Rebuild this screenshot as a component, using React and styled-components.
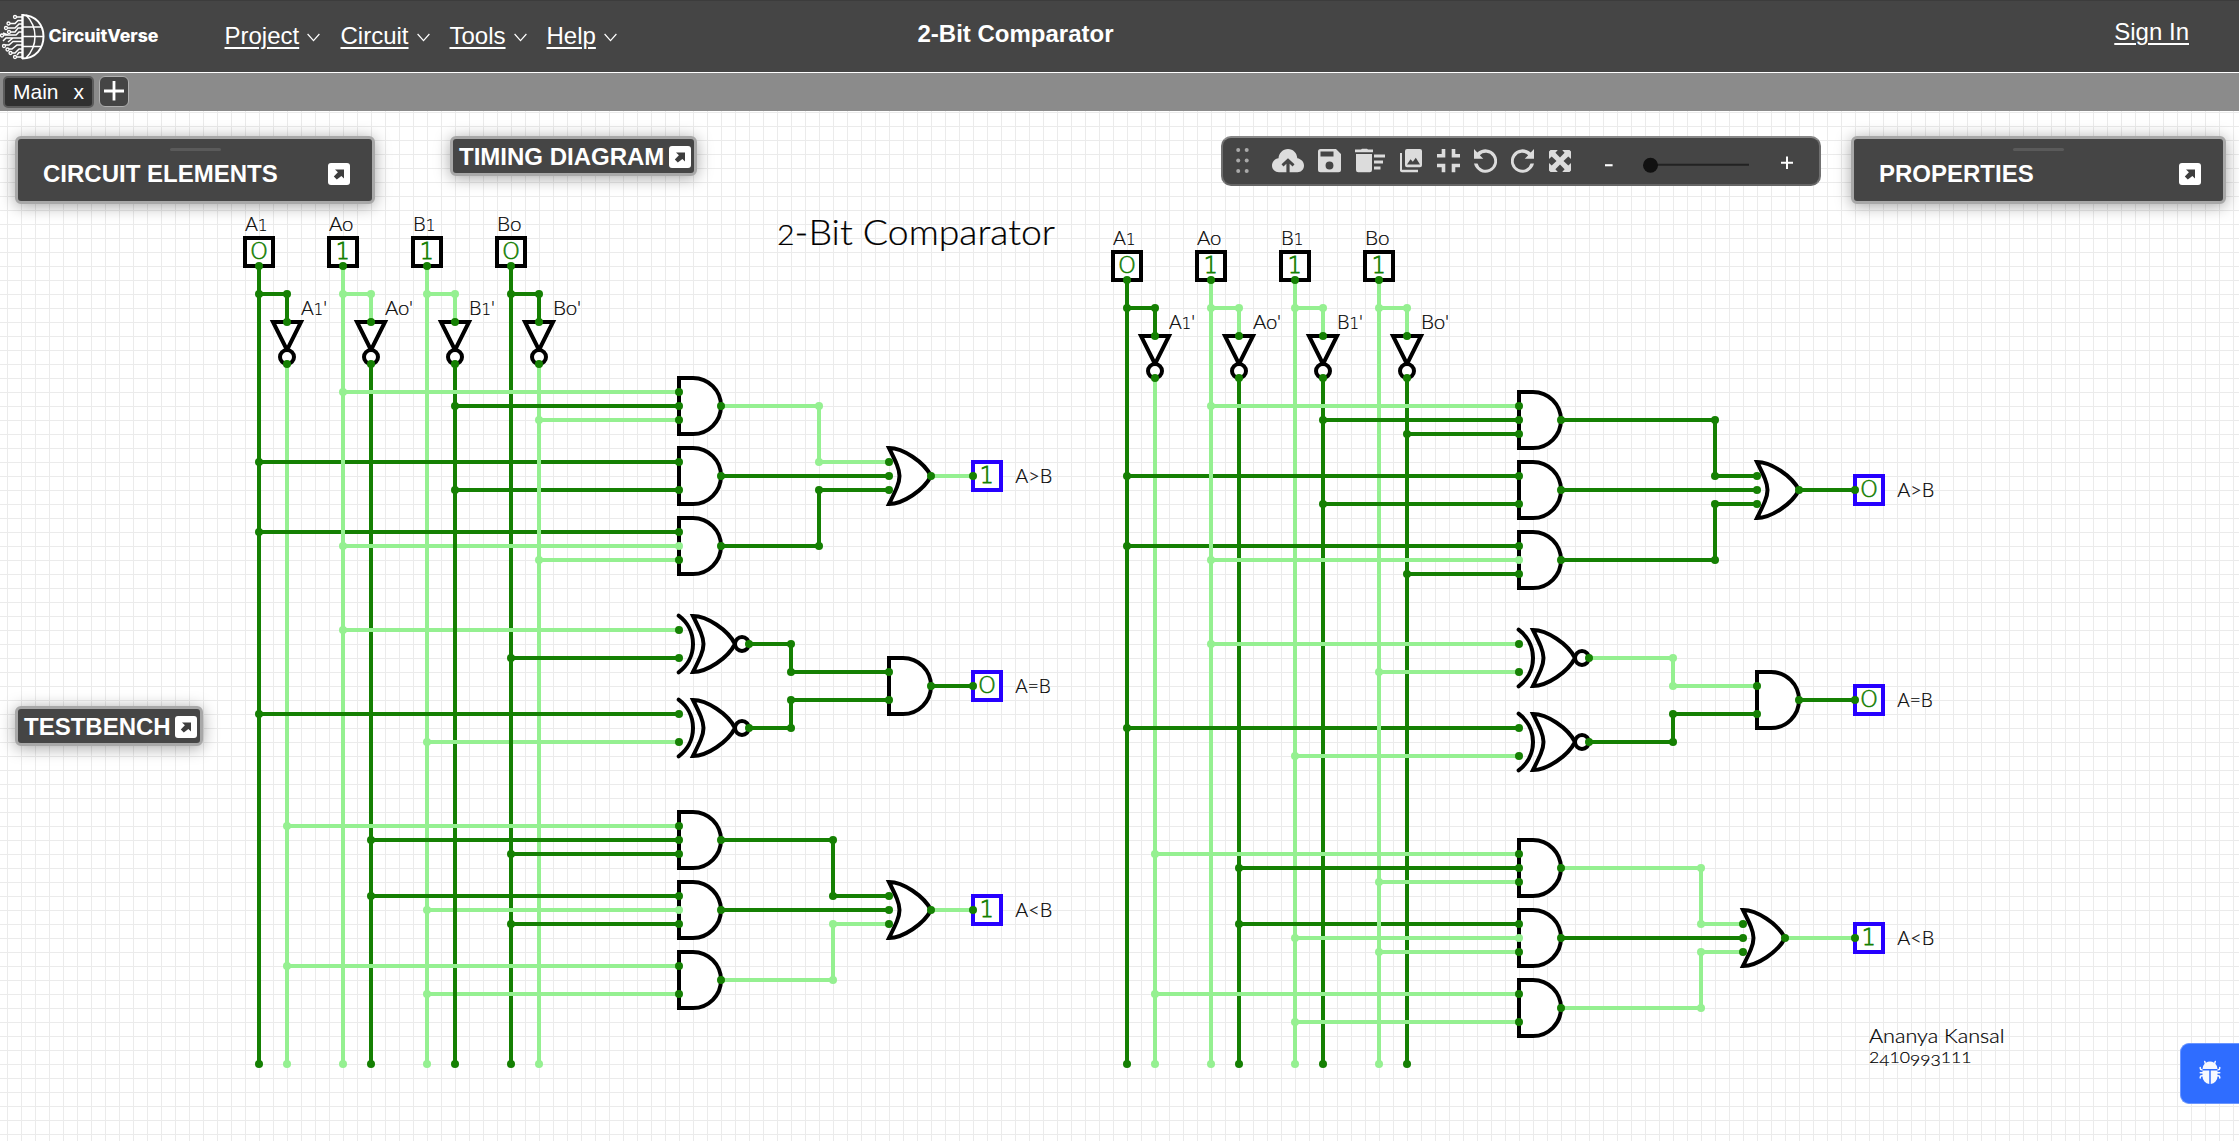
import React from "react";
import styled, { createGlobalStyle } from "styled-components";
import { BsBugFill } from "react-icons/bs";

const DARK = "#158003";
const LIGHT = "#95f091";
const SANS = '"Liberation Sans", Arial, sans-serif';

const GlobalStyle = createGlobalStyle`
  body { margin: 0; background: #fff; overflow: hidden; }
  * { box-sizing: border-box; }
`;

const Page = styled.div`
  display: flex;
  flex-direction: column;
  width: 2239px;
  height: 1141px;
  overflow: hidden;
  font-family: ${SANS};
  color: #fff;
`;

const Header = styled.header`
  display: flex;
  align-items: flex-start;
  flex: none;
  height: 73px;
  padding-right: 50px;
  background: #454545;
  border-top: 1px solid #3c3c3c;
  border-bottom: 1px solid #fff;
  font-size: 24px;
  line-height: 28px;
`;

const Brand = styled.a`
  display: flex;
  width: 224.5px;
  height: 71px;
  padding-top: 12px;
`;

const Menu = styled.nav`
  display: flex;
  width: 693px;
  padding-top: 21px;
`;

const MenuItem = styled.div`
  display: flex;
  align-items: center;
  width: ${(p) => p.$w}px;
`;

const MenuLink = styled.a`
  text-decoration: underline;
  text-decoration-thickness: 2px;
  text-underline-offset: 3px;
  margin-right: 8px;
`;

const ProjectName = styled.div`
  flex: 1;
  padding-top: 19px;
  font-weight: 700;
`;

const SignIn = styled(MenuLink)`
  margin: 17px 0 0;
`;

const TabBar = styled.div`
  display: flex;
  flex: none;
  gap: 5px;
  height: 38px;
  padding: 3px;
  background: #8b8b8b;
`;

const Tab = styled.div`
  display: flex;
  justify-content: space-between;
  width: 91px;
  height: 32px;
  padding: 1px 8px 0;
  border: 2px solid #5c5c5c;
  border-radius: 5px;
  background: #303030;
  font-size: 21px;
  line-height: 26px;
`;

const AddTab = styled.button`
  display: flex;
  align-items: center;
  justify-content: center;
  width: 30px;
  height: 31px;
  padding: 0 0 2px;
  border: 1.5px solid #b0b0b0;
  border-radius: 6px;
  background: #454545;
`;

const Workspace = styled.main`
  position: relative;
  flex: 1;
  overflow: hidden;
  background: #fff;
`;

const Board = styled.svg`
  display: block;
  width: 2239px;
  height: 1030px;
`;

const Wire = styled.path`
  fill: none;
  stroke: ${(p) => (p.$on ? LIGHT : DARK)};
  stroke-width: 4;
`;

const Dot = styled.circle`
  fill: ${(p) => (p.$on ? LIGHT : DARK)};
`;

const Shape = styled.path`
  fill: ${(p) => (p.$open ? "none" : "#fff")};
  stroke: #000;
  stroke-width: 4;
`;

const PinBox = styled.rect`
  fill: #fff;
  stroke: ${(p) => (p.$out ? "#2600ff" : "#000")};
  stroke-width: 4;
`;

const PinValue = styled.text`
  font-family: ${(p) => (p.$round ? "Lato" : '"DejaVu Sans"')}, sans-serif;
  font-size: ${(p) => (p.$round ? 23.5 : 23)}px;
  font-weight: ${(p) => (p.$round ? 300 : 200)};
  fill: ${DARK};
  stroke: ${DARK};
  stroke-width: ${(p) => (p.$round ? 0.3 : 0.8)}px;
`;

const Caption = styled.text`
  font-family: Lato, sans-serif;
  font-weight: 300;
  font-size: ${(p) => p.$size || 19.6}px;
  fill: #000;
  stroke: #000;
  stroke-width: 0.2px;
`;

const SmallDigit = styled.tspan`
  font-size: ${(p) => p.$size || 15}px;
  font-family: ${(p) => (p.$serif ? '"DejaVu Sans"' : "Lato")}, sans-serif;
  font-weight: ${(p) => (p.$serif ? 200 : 300)};
`;

const Panel = styled.section`
  position: absolute;
  left: ${(p) => p.$x}px;
  top: ${(p) => p.$y}px;
  width: ${(p) => p.$w}px;
  height: ${(p) => (p.$compact ? 40 : 68)}px;
  border: 3px solid #a8a8a8;
  border-radius: 6px;
  background: #454545;
  box-shadow: 0 2px 16px rgba(0, 0, 0, 0.36);
  font-size: 24px;
  font-weight: 700;
  line-height: 28px;
`;

const PanelRow = styled.div`
  display: flex;
  align-items: center;
  justify-content: space-between;
  padding: ${(p) => (p.$compact ? "3px 3px 0 6px" : "9px 22px 0 25px")};
`;

const PanelTitle = styled.span`
  padding-top: ${(p) => (p.$compact ? 1 : 0)}px;
`;

const Grip = styled.div`
  width: 51px;
  height: 3px;
  margin: 9px auto 0;
  border-radius: 2px;
  background: #5a5a5a;
`;

const ToolBar = styled.div`
  position: absolute;
  left: 1221px;
  top: 25px;
  display: flex;
  align-items: flex-start;
  width: 600px;
  height: 50px;
  padding: 10px 26px 0 13px;
  border: 2px solid #707070;
  border-top-color: #888;
  border-bottom-color: #666;
  border-radius: 10px;
  background: #454545;
`;

const ToolIcon = styled.svg`
  flex: none;
  width: ${(p) => p.$w}px;
  height: 25px;
  margin-right: ${(p) => p.$gap}px;
  fill: #dcdcdc;
`;

const BugButton = styled.button`
  position: absolute;
  right: 0;
  top: 932px;
  display: flex;
  align-items: center;
  width: 59px;
  height: 61px;
  padding: 0 0 4px 17px;
  border: 1px solid #6b96ff;
  border-right: 0;
  border-radius: 9px 0 0 9px;
  background: #2f6dff;
  color: #f6f8ff;
`;

const ChevronIcon = styled.svg`
  margin-top: 3px;
  fill: none;
  stroke: #fff;
  stroke-width: 1.2;
`;

function Chevron() {
  return (
    <ChevronIcon width="13" height="9" viewBox="0 0 13 9">
      <path d="M.6 1 6.5 7.6 12.4 1" />
    </ChevronIcon>
  );
}

function Logo() {
  return (
    <svg width="170" height="48" viewBox="0 13 170 48">
      <g fill="none" stroke="#fff" strokeWidth="1.5">
        <path d="M22.5 14V59" strokeWidth="2.4" />
        <path d="M22 15C36 15 43.5 25 43.5 36.5S36 58.5 22 58.5" strokeWidth="2" />
        <path d="M26 15C38 27 38 46 26 58" />
        <path d="M22 27H41M22 36.5H43M22 46.5H41" />
        <path d="M22 17H16M22 20.5H18L15 23.5H10M22 24H19L15 28H8M22 28H18L15 32H10M22 32H19L16 35H4M22 38H6L3 41M22 41.5H13L9 45H5M22 45H17L12 49H8M22 49H19L15 53H12M22 52.5H19L17 55M22 57H16M8 35 3 33M13 38 8 42" />
      </g>
      <g fill="#454545" stroke="#fff" strokeWidth="1.3">
        <circle cx="15" cy="17" r="1.5" /><circle cx="8.5" cy="23.5" r="1.5" />
        <circle cx="6" cy="28" r="1.5" /><circle cx="9" cy="32" r="1.5" />
        <circle cx="2" cy="35.5" r="1.5" /><circle cx="4" cy="46" r="1.5" />
        <circle cx="7.5" cy="49.5" r="1.5" /><circle cx="10.5" cy="53" r="1.5" />
        <circle cx="15" cy="57" r="1.5" />
      </g>
      <text x="48.5" y="42.3" textLength="110" lengthAdjust="spacingAndGlyphs" fontFamily="Inter, sans-serif" fontWeight="800" fontSize="16.8" fill="#fff">
        CircuitVerse
      </text>
    </svg>
  );
}

function PopOut() {
  return (
    <svg width="22" height="22" viewBox="0 0 22 22">
      <rect width="22" height="22" rx="3" fill="#fff" />
      <path d="M7 6.5H16V15.5L13.4 13 8.8 16.6 5.8 13.6 9.9 9.3Z" fill="#3d3d3d" />
    </svg>
  );
}

function FloatingPanel({ title, compact, x, y, w }) {
  return (
    <Panel $x={x} $y={y} $w={w} $compact={compact}>
      {!compact && <Grip />}
      <PanelRow $compact={compact}>
        <PanelTitle $compact={compact}>{title}</PanelTitle>
        <PopOut />
      </PanelRow>
    </Panel>
  );
}

function Tools() {
  return (
    <ToolBar>
      <ToolIcon $w={14} $gap={22} viewBox="0 0 14 25">
        {[2, 12.5, 23].map((cy) => (
          <React.Fragment key={cy}>
            <circle cx="2.2" cy={cy} r="2" fill="#aaa" />
            <circle cx="10.7" cy={cy} r="2" fill="#aaa" />
          </React.Fragment>
        ))}
      </ToolIcon>
      <ToolIcon $w={32} $gap={14} viewBox="0 0 32 25">
        <path fillRule="evenodd" d="M6.5 10.2C7 5 10.800 1 16 1s9 4 9.300 9.300C29.300 11 32 14 32 17.500 32 21.500 29 24.200 25.500 24.200H7C3 24.200 0 21.300 0 17.500 0 13.700 2.800 10.800 6.500 10.200ZM14.400 24.200H17.600V15.800L20.600 18.600 22.500 16.300 16 10.300 9.500 16.300 11.500 18.600 14.400 15.800Z" />
      </ToolIcon>
      <ToolIcon $w={23} $gap={14} viewBox="0 0 23 25">
        <path fillRule="evenodd" d="M2.500 1H18L23 6V21.700A2.500 2.500 0 0 1 20.500 24.200H2.500A2.500 2.500 0 0 1 0 21.700V3.500A2.500 2.500 0 0 1 2.500 1ZM2.500 3.500V8.600H15.500V3.500ZM11.500 13.500A3.900 3.900 0 1 0 11.500 21.400 3.900 3.900 0 0 0 11.500 13.500Z" />
      </ToolIcon>
      <ToolIcon $w={30} $gap={15} viewBox="0 0 30 25">
        <path d="M0 1.600H6L7 .8H12L13 1.600H18V4.300H0ZM1 6H17V22A2.200 2.200 0 0 1 14.800 24.200H3.200A2.200 2.200 0 0 1 1 22ZM19 6.500H30V9.400H19ZM19 12.500H28V15.400H19ZM19 18.500H25.500V21.400H19Z" />
      </ToolIcon>
      <ToolIcon $w={22} $gap={15} viewBox="0 0 22 25">
        <path fillRule="evenodd" d="M7 1H20A2 2 0 0 1 22 3V17.200A2 2 0 0 1 20 19.200H7A2 2 0 0 1 5 17.200V3A2 2 0 0 1 7 1ZM7 16.500H20L15.800 9.800 12.800 13.800 10.500 11.200ZM0 5H2V21.800H18V24.200H2A2 2 0 0 1 0 22Z" />
      </ToolIcon>
      <ToolIcon $w={23} $gap={14} viewBox="0 0 23 25">
        <path d="M4.700 1H8.300V9.400H0V6H4.700ZM14.700 1H18.300V6H23V9.400H14.700ZM0 15.800H8.300V24.200H4.700V19.300H0ZM14.700 15.800H23V19.300H18.300V24.200H14.700Z" />
      </ToolIcon>
      <ToolIcon $w={23} $gap={14} viewBox="0 0 23 25">
        <path d="M0 1V10.800H9.300L5.800 7.200A8.500 8.500 0 1 1 3.500 15.500H0A11.700 11.700 0 1 0 3.300 4.600Z" />
      </ToolIcon>
      <ToolIcon $w={23} $gap={15} viewBox="0 0 23 25">
        <path transform="translate(23) scale(-1 1)" d="M0 1V10.800H9.300L5.800 7.200A8.500 8.500 0 1 1 3.500 15.500H0A11.700 11.700 0 1 0 3.300 4.600Z" />
      </ToolIcon>
      <ToolIcon $w={22} $gap={33} viewBox="0 0 22 25">
        <path d="M1.500 2H8.800L6.400 4.800 11 9.500 15.600 4.800 13.200 2H20.500L22 3.500V11L19.300 8.400 14.500 13 19.300 17.600 22 15V22.500L20.500 24H13.200L15.600 21.200 11 16.500 6.400 21.200 8.800 24H1.500L0 22.500V15L2.700 17.600 7.500 13 2.700 8.400 0 11V3.500Z" />
      </ToolIcon>
      <ToolIcon $w={10} $gap={29} viewBox="0 0 10 25">
        <path d="M1 16.200H8.600V18.300H1Z" fill="#fff" />
      </ToolIcon>
      <ToolIcon $w={108} $gap={30} viewBox="0 0 108 25">
        <path d="M8 15.800H106V17.800H8Z" fill="#222" />
        <circle cx="7.500" cy="17.300" r="7.500" fill="#111" />
      </ToolIcon>
      <ToolIcon $w={12} $gap={0} viewBox="0 0 12 25">
        <path d="M0 13.800H5V8.500H7V13.800H12V15.800H7V21H5V15.800H0Z" fill="#fff" />
      </ToolIcon>
    </ToolBar>
  );
}

function And({ x, y }) {
  return <Shape d={`M${x - 14} ${y - 28}H${x}A28 28 0 0 1 ${x} ${y + 28}H${x - 14}Z`} />;
}

const orPath = (x, y) =>
  `M${x - 14} ${y - 28}C${x} ${y - 28} ${x + 21} ${y - 14} ${x + 28} ${y}C${x + 21} ${y + 14} ${x} ${y + 28} ${x - 14} ${y + 28}C${x} ${y} ${x} ${y} ${x - 14} ${y - 28}Z`;

function Or({ x, y }) {
  return <Shape d={orPath(x, y)} />;
}

function Xnor({ x, y }) {
  return (
    <g>
      <Shape d={orPath(x, y)} />
      <Shape $open strokeLinecap="round" d={`M${x - 28.4} ${y - 28.3}A35 35 0 0 1 ${x - 28.4} ${y + 28.3}`} />
      <Shape d={`M${x + 28} ${y}a7 7 0 1 1 14 0a7 7 0 1 1 -14 0`} />
    </g>
  );
}

function Inverter({ x, y }) {
  return (
    <g>
      <Shape d={`M${x - 14} ${y}H${x + 14}L${x} ${y + 28}Z`} />
      <Shape d={`M${x - 7} ${y + 35}a7 7 0 1 1 14 0a7 7 0 1 1 -14 0`} />
    </g>
  );
}

function Pin({ x, y, value, out }) {
  return (
    <g>
      <PinBox $out={out} x={x - 14} y={y - 14} width="28" height="28" />
      {value === 0 ? (
        <PinValue $round x={x - 8.3} y={y + 7.2} textLength="16.600" lengthAdjust="spacingAndGlyphs">0</PinValue>
      ) : (
        <PinValue x={x - 7.2} y={y + 7.2} textLength="14" lengthAdjust="spacingAndGlyphs">1</PinValue>
      )}
    </g>
  );
}

function Label({ x, y, name }) {
  const prime = name.length > 2;
  const w = (name[1] === "1" ? 22.500 : 24.500) + (prime ? 3.500 : 0);
  return (
    <Caption x={x} y={y} textLength={w} lengthAdjust="spacingAndGlyphs">
      {name[0]}
      {name[1] === "1" ? <SmallDigit $serif>1</SmallDigit> : "o"}
      {prime ? "'" : ""}
    </Caption>
  );
}

// taps: [source x, y, high]; links: [points, high]; over: [x, y, high] verticals that cross on top
function Circuit({ x0, y0, inputs, gateX, taps, links, over, gates, outputs, lightDots }) {
  const names = ["A1", "A0", "B1", "B0"];
  return (
    <g>
      {inputs.map((v, i) => {
        const x = x0 + i * 84;
        return (
          <g key={i}>
            <Wire $on={v} d={`M${x} ${y0 + 14}V1064M${x} ${y0 + 42}H${x + 28}V${y0 + 70}`} />
            <Wire $on={!v} d={`M${x + 28} ${y0 + 112}V1064`} />
          </g>
        );
      })}
      {[...taps].sort((a, b) => a[2] - b[2]).map(([x, y, on], i) => (
        <Wire key={i} $on={on} d={`M${x} ${y}H${gateX}`} />
      ))}
      {over.map(([x, y, on], i) => (
        <Wire key={i} $on={on} d={`M${x} ${y - 4}V${y + 4}`} />
      ))}
      {links.map(([pts, on], i) => (
        <Wire key={i} $on={on} d={"M" + pts.map((p) => p.join(" ")).join("L")} />
      ))}
      {gates.map(([Kind, x, y], i) => <Kind key={i} x={x} y={y} />)}
      {inputs.map((v, i) => {
        const x = x0 + i * 84;
        const w = names[i];
        return (
          <g key={i}>
            <Inverter x={x + 28} y={y0 + 70} />
            <Pin x={x} y={y0} value={v} />
            <Dot r="4" $on={v} cx={x} cy={y0 + 42} />
            <Dot r="4" $on={v} cx={x + 28} cy={y0 + 42} />
            <Dot r="4" $on={v} cx={x} cy={1064} />
            <Dot r="4" $on={!v} cx={x + 28} cy={1064} />
            <Dot r="4" cx={x} cy={y0 + 14} />
            <Dot r="4" cx={x + 28} cy={y0 + 70} />
            <Dot r="4" cx={x + 28} cy={y0 + 112} />
            <Label x={x - 14} y={y0 - 20.700} name={w} />
            <Label x={x + 42} y={y0 + 63} name={w + "'"} />
          </g>
        );
      })}
      {taps.map(([x, y, on], i) => (
        <g key={i}>
          <Dot r="4" $on={on} cx={x} cy={y} />
          <Dot r="4" $on={lightDots.includes(y)} cx={gateX} cy={y} />
        </g>
      ))}
      {outputs.map(([x, y, v, text], i) => (
        <g key={i}>
          <Pin x={x} y={y} value={v} out />
          <Caption x={x + 28.3} y={y + 7} textLength={text === "A=B" ? 35.500 : 37} lengthAdjust="spacingAndGlyphs">{text}</Caption>
        </g>
      ))}
      {links.map(([pts, on], i) =>
        pts.map(([x, y], j) => (
          <Dot key={i + "-" + j} r="4" $on={on && j > 0 && j < pts.length - 1} cx={x} cy={y} />
        ))
      )}
    </g>
  );
}

const left = {
  x0: 259, y0: 252, gateX: 679, inputs: [0, 1, 1, 0], lightDots: [546, 910],
  taps: [
    [343, 392, 1], [455, 406, 0], [539, 420, 1], [259, 462, 0], [455, 490, 0],
    [259, 532, 0], [343, 546, 1], [539, 560, 1], [343, 630, 1], [511, 658, 0],
    [259, 714, 0], [427, 742, 1], [287, 826, 1], [371, 840, 0], [511, 854, 0],
    [371, 896, 0], [427, 910, 1], [511, 924, 0], [287, 966, 1], [427, 994, 1],
  ],
  over: [[343, 462, 1], [343, 532, 1], [539, 462, 1], [539, 490, 1], [539, 532, 1], [455, 546, 0], [455, 630, 0], [511, 742, 0], [455, 910, 0], [455, 994, 0]],
  links: [
    [[[721, 406], [819, 406], [819, 462], [889, 462]], 1],
    [[[721, 476], [889, 476]], 0],
    [[[721, 546], [819, 546], [819, 490], [889, 490]], 0],
    [[[931, 476], [973, 476]], 1],
    [[[749, 644], [791, 644], [791, 672], [889, 672]], 0],
    [[[749, 728], [791, 728], [791, 700], [889, 700]], 0],
    [[[931, 686], [973, 686]], 0],
    [[[721, 840], [833, 840], [833, 896], [889, 896]], 0],
    [[[721, 910], [889, 910]], 0],
    [[[721, 980], [833, 980], [833, 924], [889, 924]], 1],
    [[[931, 910], [973, 910]], 1],
  ],
  gates: [
    [And, 693, 406], [And, 693, 476], [And, 693, 546], [Or, 903, 476],
    [Xnor, 707, 644], [Xnor, 707, 728], [And, 903, 686],
    [And, 693, 840], [And, 693, 910], [And, 693, 980], [Or, 903, 910],
  ],
  outputs: [[987, 476, 1, "A>B"], [987, 686, 0, "A=B"], [987, 910, 1, "A<B"]],
};

const right = {
  x0: 1127, y0: 266, gateX: 1519, inputs: [0, 1, 1, 1], lightDots: [560, 938],
  taps: [
    [1211, 406, 1], [1323, 420, 0], [1407, 434, 0], [1127, 476, 0], [1323, 504, 0],
    [1127, 546, 0], [1211, 560, 1], [1407, 574, 0], [1211, 644, 1], [1379, 672, 1],
    [1127, 728, 0], [1295, 756, 1], [1155, 854, 1], [1239, 868, 0], [1379, 882, 1],
    [1239, 924, 0], [1295, 938, 1], [1379, 952, 1], [1155, 994, 1], [1295, 1022, 1],
  ],
  over: [[1211, 476, 1], [1211, 546, 1], [1379, 728, 1], [1379, 924, 1]],
  links: [
    [[[1561, 420], [1715, 420], [1715, 476], [1757, 476]], 0],
    [[[1561, 490], [1757, 490]], 0],
    [[[1561, 560], [1715, 560], [1715, 504], [1757, 504]], 0],
    [[[1799, 490], [1855, 490]], 0],
    [[[1589, 658], [1673, 658], [1673, 686], [1757, 686]], 1],
    [[[1589, 742], [1673, 742], [1673, 714], [1757, 714]], 0],
    [[[1799, 700], [1855, 700]], 0],
    [[[1561, 868], [1701, 868], [1701, 924], [1743, 924]], 1],
    [[[1561, 938], [1743, 938]], 0],
    [[[1561, 1008], [1701, 1008], [1701, 952], [1743, 952]], 1],
    [[[1785, 938], [1855, 938]], 1],
  ],
  gates: [
    [And, 1533, 420], [And, 1533, 490], [And, 1533, 560], [Or, 1771, 490],
    [Xnor, 1547, 658], [Xnor, 1547, 742], [And, 1771, 700],
    [And, 1533, 868], [And, 1533, 938], [And, 1533, 1008], [Or, 1757, 938],
  ],
  outputs: [[1869, 490, 0, "A>B"], [1869, 700, 0, "A=B"], [1869, 938, 1, "A<B"]],
};

// Digits with descenders hang below the baseline; the others sit at x-height.
function TextFigures({ x, y, text }) {
  let shift = 0;
  return (
    <Caption x={x} y={y} $size={16.3} textLength="102.500" lengthAdjust="spacingAndGlyphs">
      {text.split("").map((c, i) => {
        const want = "3459".includes(c) ? 3 : 0;
        const dy = want - shift;
        shift = want;
        return (
          <tspan key={i} dy={dy}>{c}</tspan>
        );
      })}
    </Caption>
  );
}

export default function App() {
  return (
    <Page>
      <GlobalStyle />
      <Header>
        <Brand><Logo /></Brand>
        <Menu>
          <MenuItem $w={116}><MenuLink>Project</MenuLink><Chevron /></MenuItem>
          <MenuItem $w={109}><MenuLink>Circuit</MenuLink><Chevron /></MenuItem>
          <MenuItem $w={97}><MenuLink>Tools</MenuLink><Chevron /></MenuItem>
          <MenuItem $w={90}><MenuLink>Help</MenuLink><Chevron /></MenuItem>
        </Menu>
        <ProjectName>2-Bit Comparator</ProjectName>
        <SignIn>Sign In</SignIn>
      </Header>
      <TabBar>
        <Tab><span>Main</span><span>x</span></Tab>
        <AddTab>
          <svg width="20" height="20" viewBox="0 0 20 20" fill="#fff"><path d="M0 8.600H8.600V0H11.400V8.600H20V11.400H11.400V19.500H8.600V11.400H0Z" /></svg>
        </AddTab>
      </TabBar>
      <Workspace>
        <Board viewBox="0 111 2239 1030">
          <defs>
            <pattern id="grid" x="7" y="0" width="14" height="14" patternUnits="userSpaceOnUse">
              <path d="M0 0H14V1H1V14H0Z" fill="#ebebeb" />
            </pattern>
          </defs>
          <rect x="0" y="111" width="2239" height="1030" fill="url(#grid)" />
          <Circuit {...left} />
          <Circuit {...right} />
          <Caption $size={34.500} x="777" y="245" textLength="278" lengthAdjust="spacingAndGlyphs">
            <SmallDigit $size={28}>2</SmallDigit>-Bit Comparator
          </Caption>
          <Caption x="1869" y="1043.300" textLength="135.500" lengthAdjust="spacingAndGlyphs">Ananya Kansal</Caption>
          <TextFigures x={1869} y={1063.300} text="2410993111" />
        </Board>
        <FloatingPanel title="CIRCUIT ELEMENTS" x={15} y={25} w={360} />
        <FloatingPanel compact title="TIMING DIAGRAM" x={450} y={25} w={247} />
        <Tools />
        <FloatingPanel title="PROPERTIES" x={1851} y={25} w={375} />
        <FloatingPanel compact title="TESTBENCH" x={15} y={595} w={188} />
        <BugButton><BsBugFill size={24} /></BugButton>
      </Workspace>
    </Page>
  );
}
